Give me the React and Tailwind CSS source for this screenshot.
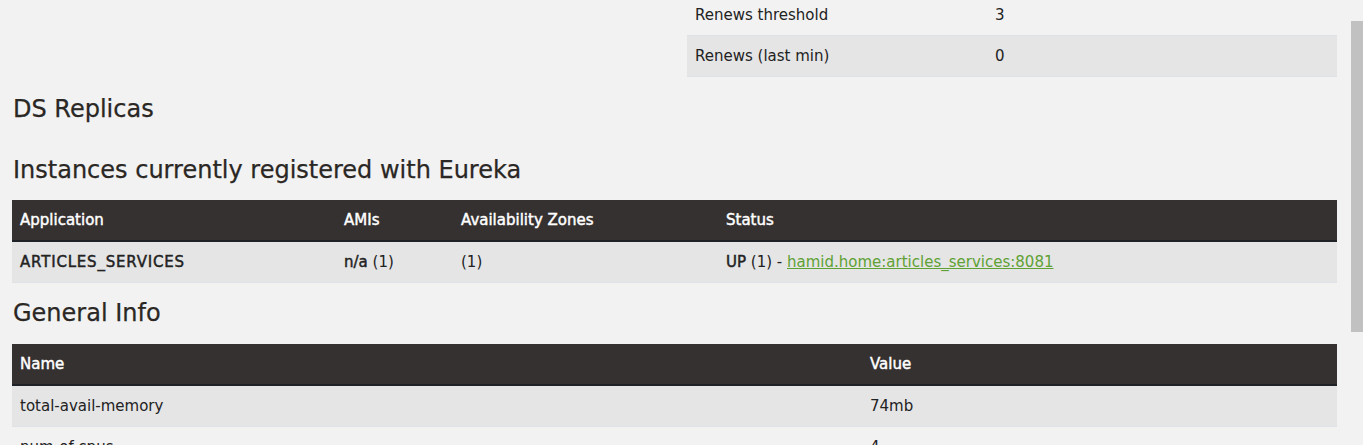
import React from 'react'

const font = { fontFamily: '"DejaVu Sans", "Liberation Sans", sans-serif' }

var fakeBold = 'font-normal [-webkit-text-stroke:0.45px_currentColor]'

function HeadRow({ cols }) {
  return (
    <div className="flex h-[42px] bg-[#353130] border-b-2 border-b-[#1f2327] text-white">
      {cols.map(function (c, i) {
        return (
          <div key={i} className={'px-2 flex items-center ' + c.w + ' ' + fakeBold}>{c.t}</div>
        )
      })}
    </div>
  )
}

function Row({ shaded, children }) {
  return (
    <div className={'flex h-[41px] border-b border-[#dde3e8] ' + (shaded ? 'bg-[#e5e5e5]' : '')}>
      {children}
    </div>
  )
}

export default function App() {
  return (
    <div className="relative h-[445px] overflow-hidden bg-[#f2f2f2] text-[15px] text-[#222]" style={font}>
      <div className="pl-3 pr-[26px]">
        {/* top stats table */}
        <div className="flex justify-end -mt-[5px]">
          <div className="w-[650px]">
            <Row>
              <div className="px-2 flex items-center w-[300px]">Renews threshold</div>
              <div className="px-2 flex items-center">3</div>
            </Row>
            <Row shaded>
              <div className="px-2 flex items-center w-[300px]">Renews (last min)</div>
              <div className="px-2 flex items-center">0</div>
            </Row>
          </div>
        </div>

        <h1 className="mt-[19px] text-[24px] leading-[26px] text-[#2a2724] pl-[1px] [-webkit-text-stroke:0.25px_currentColor]">DS Replicas</h1>
        <h1 className="mt-[35px] text-[24px] leading-[26px] text-[#2a2724] pl-[1px] [-webkit-text-stroke:0.25px_currentColor]">Instances currently registered with Eureka</h1>

        <div className="mt-[17px]">
          <HeadRow cols={[{ t: 'Application', w: 'w-[324px]' }, { t: 'AMIs', w: 'w-[117px]' }, { t: 'Availability Zones', w: 'w-[265px]' }, { t: 'Status', w: 'flex-1' }]} />
          <Row shaded>
            <div className={'px-2 flex items-center w-[324px] tracking-[0.8px] ' + fakeBold}>ARTICLES_SERVICES</div>
            <div className="px-2 flex items-center w-[117px] whitespace-pre"><span className={fakeBold}>n/a</span> (1)</div>
            <div className="px-2 flex items-center w-[265px]">(1)</div>
            <div className="px-2 flex items-center flex-1 whitespace-pre">
              <span className={fakeBold}>UP</span> (1) - <a href="#" className="text-[#5fa134] underline">hamid.home:articles_services:8081</a>
            </div>
          </Row>
        </div>

        <h1 className="mt-[17px] text-[24px] leading-[26px] text-[#2a2724] pl-[1px] [-webkit-text-stroke:0.25px_currentColor]">General Info</h1>

        <div className="mt-[18px]">
          <HeadRow cols={[{ t: 'Name', w: 'w-[850px]' }, { t: 'Value', w: 'flex-1' }]} />
          <Row shaded>
            <div className="px-2 flex items-center w-[850px]">total-avail-memory</div>
            <div className="px-2 flex items-center">74mb</div>
          </Row>
          <Row>
            <div className="px-2 flex items-center w-[850px]">num-of-cpus</div>
            <div className="px-2 flex items-center">4</div>
          </Row>
        </div>
      </div>

      {/* scrollbar thumb */}
      <div className="absolute right-0 top-[21px] w-[12px] h-[311px] bg-[#c1c1c1]" />
    </div>
  )
}
